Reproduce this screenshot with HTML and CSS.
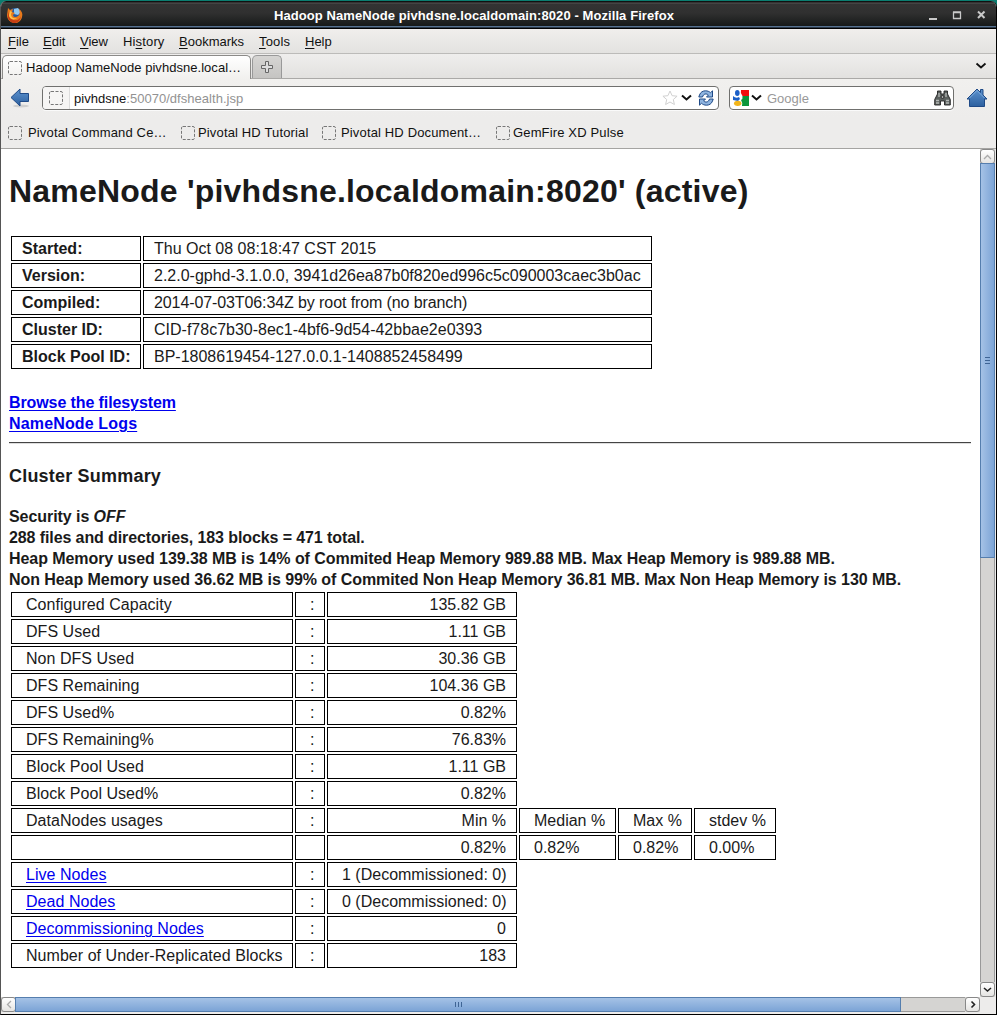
FILE: index.html
```html
<!DOCTYPE html>
<html lang="en">
<head>
<meta charset="utf-8">
<title>Hadoop NameNode pivhdsne.localdomain:8020</title>
<link rel="stylesheet" href="styles.css">
</head>
<body>
<div class="window">
  <header class="titlebar">
    <svg class="fox" width="16" height="16" viewBox="0 0 16 16"><circle cx="8" cy="8" r="7" fill="#285b9c"/><path d="M7 2l4-1 3 4-3 3-4-1z" fill="#8fc8ef"/><path d="M1 1l2 2 3-1-1 3 3 1-2 2c0 2 3 3 5 1 2-1 2-4 1-7 3 2 4 5 3 8-1 4-4 6-7 6-5 0-8-4-8-8z" fill="#e8791a"/><path d="M2 4c-1 5 1 8 5 9 3 1 6-1 7-4-1 6-4 7-7 7-5-1-8-6-5-12z" fill="#c63e14"/><path d="M3 4l2 1-1 2c0 4 3 5 6 4-3 3-8 1-8-3z" fill="#ffc247"/></svg>
    <span class="title">Hadoop NameNode pivhdsne.localdomain:8020 - Mozilla Firefox</span>
    <svg class="controls" width="60" height="12" viewBox="0 0 60 12" fill="none" stroke="#c9c9c9" stroke-width="2"><path d="M1 10h8"/><path d="M25.500 3.500h7v6h-7zM25 3h8" stroke-width="1.300"/><path d="M50 2.500l6.500 6.500M56.500 2.500l-6.500 6.500"/></svg>
  </header>

  <nav class="menubar"><span class="m1"><u>F</u>ile</span><span class="m2"><u>E</u>dit</span><span class="m3"><u>V</u>iew</span><span class="m4">Hi<u>s</u>tory</span><span class="m5"><u>B</u>ookmarks</span><span class="m6"><u>T</u>ools</span><span class="m7"><u>H</u>elp</span></nav>

  <div class="tabs">
    <div class="tab"><svg class="page-icon" width="14" height="14"><rect x=".5" y=".5" width="13" height="13" rx="1.5"/></svg><span>Hadoop NameNode pivhdsne.local…</span></div>
    <div class="newtab"><svg width="12" height="12" viewBox="0 0 12 12"><path d="M4.500.5h3v4h4v3h-4v4h-3v-4h-4v-3h4z" fill="#ddd" stroke="#666"/></svg></div>
    <svg class="alltabs" width="12" height="8" viewBox="0 0 12 8"><path d="M1.500 1.500l4.500 4 4.500-4" fill="none" stroke="#111" stroke-width="1.800"/></svg>
  </div>

  <div class="navbar">
    <svg class="back" width="20" height="20" viewBox="0 0 20 20"><defs><linearGradient id="blue" x2="0" y2="1"><stop stop-color="#5d93cf"/><stop offset="1" stop-color="#2d609f"/></linearGradient></defs><ellipse cx="11" cy="18" rx="8" ry="1.500" fill="#cfcfcf"/><path d="M1 9.500L10 1v4.500h8.500v8H10V18z" fill="url(#blue)" stroke="#1f4a87"/></svg>
    <div class="url">
      <div class="identity"><svg class="page-icon" width="14" height="14"><rect x=".5" y=".5" width="13" height="13" rx="1.5"/></svg></div>
      <span class="address"><b>pivhdsne</b>:50070/dfshealth.jsp</span>
      <svg class="star" width="16" height="16" viewBox="0 0 16 16"><path d="M8 1l2.100 4.700 5 .5-3.800 3.300 1.100 5L8 12l-4.400 2.500 1.100-5L.9 6.200l5-.5z" fill="#fff" stroke="#d0d0d0"/></svg>
      <svg class="drop" width="11" height="8" viewBox="0 0 11 8"><path d="M1 1.500l4.500 4 4.500-4" fill="none" stroke="#111" stroke-width="2"/></svg>
      <svg class="reload" width="16" height="16" viewBox="0 0 16 16" stroke="#1f4a87" stroke-width="1" fill="#8fb4df"><path d="M1.500 5C2.500 2 5 .8 7.500.8c2 0 3.800.7 5 1.900L14.500.8V7H8.500l1.900-2C8.500 3.300 5.500 3.500 4.500 7H.8z"/><path d="M14.500 11c-1 3-3.500 4.200-6 4.200-2 0-3.800-.7-5-1.900l-2 1.900V9h6l-1.900 2c1.900 1.700 4.900 1.500 5.900-2h3.700z"/></svg>
    </div>
    <div class="search">
      <svg class="g" width="16" height="16" viewBox="0 0 16 16"><path d="M8 0h8v6H9.500Q7 3 8 0z" fill="#f20d0d"/><path d="M9.500 6H16v10H9q1-3-1-6 2-1 1.500-4z" fill="#0b963b"/><path d="M0 6q3 3 6 1l1 2-2 2-5-1z" fill="#1c60c8"/><ellipse cx="4.300" cy="3" rx="2.300" ry="3" fill="#1c60c8"/><ellipse cx="4.700" cy="13.300" rx="3.700" ry="2.600" fill="#f2b51b"/></svg>
      <svg class="drop" width="11" height="8" viewBox="0 0 11 8"><path d="M1 1.500l4.500 4 4.500-4" fill="none" stroke="#111" stroke-width="2"/></svg>
      <span class="placeholder">Google</span>
      <svg class="find" width="17" height="16" viewBox="0 0 17 16" fill="#5b605e" stroke="#222" stroke-width=".9"><path d="M3.500 1h3.500v3h3V1h3.500v3l2.800 5.500v5.500H10.500v-4h-4v4H.7V9.500L3.500 4z"/><path d="M2 10.500h3M2 13h3M12 10.500h3M12 13h3M5 3v4M12 3v4" stroke="#b5b8b6" stroke-width="1.300"/><circle cx="8.500" cy="7" r="1.500" fill="#aaa"/></svg>
    </div>
    <svg class="home" width="22" height="20" viewBox="0 0 22 20"><path d="M1 11L11 1l3.500 3.500V1.500H17V7l4 4h-2.500v7.500h-15V11z" fill="url(#blue)" stroke="#1f4a87"/><path d="M3.500 10L11 2.500 18.500 10" fill="none" stroke="#7facdc"/></svg>
  </div>

  <div class="bookmarks">
    <span class="k1"><svg class="page-icon" width="14" height="14"><rect x=".5" y=".5" width="13" height="13" rx="1.5"/></svg>Pivotal Command Ce…</span>
    <span class="k2"><svg class="page-icon" width="14" height="14"><rect x=".5" y=".5" width="13" height="13" rx="1.5"/></svg>Pivotal HD Tutorial</span>
    <span class="k3"><svg class="page-icon" width="14" height="14"><rect x=".5" y=".5" width="13" height="13" rx="1.5"/></svg>Pivotal HD Document…</span>
    <span class="k4"><svg class="page-icon" width="14" height="14"><rect x=".5" y=".5" width="13" height="13" rx="1.5"/></svg>GemFire XD Pulse</span>
  </div>

  <div class="viewport">
    <main class="content">
      <h1>NameNode 'pivhdsne.localdomain:8020' (active)</h1>
      <table class="info">
        <colgroup><col class="c-label"><col class="c-value"></colgroup>
        <tr><th>Started:</th><td>Thu Oct 08 08:18:47 CST 2015</td></tr>
        <tr><th>Version:</th><td>2.2.0-gphd-3.1.0.0, 3941d26ea87b0f820ed996c5c090003caec3b0ac</td></tr>
        <tr><th>Compiled:</th><td class="tight">2014-07-03T06:34Z by root from (no branch)</td></tr>
        <tr><th>Cluster ID:</th><td>CID-f78c7b30-8ec1-4bf6-9d54-42bbae2e0393</td></tr>
        <tr><th>Block Pool ID:</th><td>BP-1808619454-127.0.0.1-1408852458499</td></tr>
      </table>
      <div class="links"><a class="tight" href="#">Browse the filesystem</a><br><a class="loose" href="#">NameNode Logs</a></div>
      <hr>
      <h3>Cluster Summary</h3>
      <div class="summary">Security is <em>OFF</em><br><span class="tight">288 files and directories, 183 blocks = 471 total.</span><br>Heap Memory used 139.38 MB is 14% of Commited Heap Memory 989.88 MB. Max Heap Memory is 989.88 MB.<br>Non Heap Memory used 36.62 MB is 99% of Commited Non Heap Memory 36.81 MB. Max Non Heap Memory is 130 MB.</div>
      <table class="stats">
        <colgroup><col class="s1"><col class="s2"><col class="s3"><col class="s4"><col class="s5"><col class="s6"></colgroup>
        <tr><td>Configured Capacity</td><td>:</td><td>135.82 GB</td></tr>
        <tr><td>DFS Used</td><td>:</td><td>1.11 GB</td></tr>
        <tr><td>Non DFS Used</td><td>:</td><td>30.36 GB</td></tr>
        <tr><td>DFS Remaining</td><td>:</td><td>104.36 GB</td></tr>
        <tr><td>DFS Used%</td><td>:</td><td>0.82%</td></tr>
        <tr><td>DFS Remaining%</td><td>:</td><td>76.83%</td></tr>
        <tr><td>Block Pool Used</td><td>:</td><td>1.11 GB</td></tr>
        <tr><td>Block Pool Used%</td><td>:</td><td>0.82%</td></tr>
        <tr><td>DataNodes usages</td><td>:</td><td>Min %</td><td>Median %</td><td>Max %</td><td>stdev %</td></tr>
        <tr><td></td><td></td><td>0.82%</td><td>0.82%</td><td>0.82%</td><td>0.00%</td></tr>
        <tr><td><a href="#">Live Nodes</a></td><td>:</td><td>1 (Decommissioned: 0)</td></tr>
        <tr><td><a href="#">Dead Nodes</a></td><td>:</td><td>0 (Decommissioned: 0)</td></tr>
        <tr><td><a href="#">Decommissioning Nodes</a></td><td>:</td><td>0</td></tr>
        <tr><td>Number of Under-Replicated Blocks</td><td>:</td><td>183</td></tr>
      </table>
    </main>
    <div class="vscroll">
      <div class="btn off"><svg width="9" height="6" viewBox="0 0 9 6"><path d="M1 5l3.500-3.500L8 5"/></svg></div>
      <div class="thumb"><svg width="5" height="7"><path d="M0 .5h5M0 3.500h5M0 6.500h5"/></svg></div>
      <div class="track"></div>
      <div class="btn"><svg width="9" height="6" viewBox="0 0 9 6"><path d="M1 1l3.500 3L8 1"/></svg></div>
    </div>
    <div class="hscroll">
      <div class="btn off"><svg width="6" height="9" viewBox="0 0 6 9"><path d="M5 1L1.500 4.500 5 8"/></svg></div>
      <div class="thumb"><svg width="7" height="5"><path d="M.5 0v5M3.500 0v5M6.500 0v5"/></svg></div>
      <div class="track"></div>
      <div class="btn"><svg width="6" height="9" viewBox="0 0 6 9"><path d="M1.500 1.500l3 3-3 3"/></svg></div>
    </div>
    <div class="corner"></div>
  </div>
</div>
</body>
</html>
```
FILE: styles.css
```css
* { box-sizing: border-box; }
html { height: 1016px; overflow: hidden; }
body { margin: 0; height: 1016px; overflow: hidden; background: #0b7d70; font: 13px "Liberation Sans", Arial, sans-serif; color: #111; }
svg { display: block; flex: none; }
.window { width: 997px; height: 1014px; margin-top: 1px; border: solid #000; border-width: 0 1px 1px; border-left-color: #555; border-radius: 6px 6px 0 0; background: #edeceb; display: flex; flex-direction: column; overflow: hidden; box-shadow: 0 1px #fff; white-space: nowrap; }

.titlebar { height: 28px; flex: none; display: flex; align-items: center; padding: 0 11px 0 6px; background: linear-gradient(#111 0, #111 1px, #555 2px, #333 3px, #303030 12px, #171a19 25px, #56718f 25px, #56718f 26px, #000 27px); }
.title { flex: 1; padding-right: 3px; text-align: center; color: #fff; font-weight: bold; letter-spacing: .085px; }
.controls { margin-right: -3px; }
.menubar { height: 25px; flex: none; display: flex; background: linear-gradient(#f0eeec, #e3e2e0); border-bottom: 1px solid #bcbbb9; line-height: 25px; padding-left: 7px; }
.menubar u { text-underline-offset: 2px; }
.m1 { width: 35px; } .m2 { width: 37px; } .m3 { width: 43px; } .m4 { width: 56px; } .m5 { width: 80px; } .m6 { width: 46px; }
.m4, .m6 { letter-spacing: .15px; }

.tabs { height: 25px; flex: none; display: flex; align-items: flex-end; background: linear-gradient(#efeeed, #e2e1df); border-bottom: 1px solid #aaa9a7; padding-left: 1px; }
.tab { width: 249px; height: 24px; margin-bottom: -1px; border: 1px solid #8b8a88; border-bottom: 0; border-radius: 5px 5px 0 0; background: linear-gradient(#fff, #f1f0ee); display: flex; align-items: center; gap: 4px; padding-left: 5px; letter-spacing: .04px; }
.newtab { width: 30px; height: 23px; margin-left: 1px; border: 1px solid #999; border-bottom: 0; border-radius: 5px 5px 0 0; background: linear-gradient(#d6d5d3, #c5c4c2); display: grid; place-items: center; }
.alltabs { margin: 0 9px 8px auto; }
.page-icon rect { fill: none; stroke: #777; stroke-dasharray: 3 1.5; }

.navbar { height: 38px; flex: none; display: flex; align-items: center; padding: 0 8px 0 9px; background: linear-gradient(#f1f0ee, #edeceb); }
.url, .search { height: 24px; border: 1px solid #70706e; border-radius: 4px; background: #fff; display: flex; align-items: center; box-shadow: 0 1px #fafafa; }
.url { width: 677px; margin-left: 12px; }
.identity { width: 27px; height: 22px; border-right: 1px solid #ddd; background: #f6f5f4; border-radius: 3px 0 0 3px; display: grid; place-items: center; }
.address { flex: 1; padding-left: 4px; color: #929292; letter-spacing: .03px; }
.address b { font-weight: normal; color: #111; }
.star { margin-right: 3px; }
.reload { margin: 0 4px 0 6px; }
.search { width: 225px; margin-left: 10px; padding: 0 2px 0 3px; }
.search .drop { margin-left: 2px; }
.placeholder { flex: 1; padding-left: 5px; color: #999; }
.home { margin-left: 12px; }

.bookmarks { height: 32px; flex: none; display: flex; align-items: center; padding-left: 7px; border-bottom: 1px solid #a5a4a2; background: #edeceb; letter-spacing: .15px; }
.bookmarks span { display: flex; align-items: center; }
.k1 { width: 173px; gap: 6px; } .k2 { width: 141px; gap: 3px; } .k3 { width: 174px; gap: 5px; } .k4 { gap: 3px; }

.viewport { flex: 1; min-height: 0; display: grid; grid-template: 848px 16px / 979px 16px; background: #edeceb; }
.content { background: #fff; padding: 21px 9px 0 8px; font-size: 16px; color: #1a1a1a; overflow: hidden; }
h1 { margin: 0 0 22px; font-size: 32px; line-height: 42px; letter-spacing: .21px; }
table { border-spacing: 2px; table-layout: fixed; }
td, th { height: 25px; border: 1px solid #000; padding: 0 10px; line-height: 23px; text-align: left; }
.info { width: 645px; }
.c-label { width: 130px; } .c-value { width: 509px; }
a { color: #00e; text-underline-offset: 2px; text-decoration-thickness: 1px; }
.links { margin-top: 21px; line-height: 21px; font-weight: bold; }
hr { margin: 8px 0 0; border: 0; height: 2px; background: linear-gradient(#444 50%, #ddd 50%); }
h3 { margin: 21px 0 0; font-size: 18px; line-height: 22px; letter-spacing: .2px; }
.summary { margin-top: 19px; line-height: 21px; font-weight: bold; letter-spacing: -.065px; }
.tight { letter-spacing: -.1px; }
.loose { letter-spacing: .15px; }
.stats { width: 769px; }
.stats td { padding-left: 14px; }
.stats td:first-child { letter-spacing: .04px; }
.stats td:nth-child(3) { text-align: right; }
.s1 { width: 282px; } .s2 { width: 30px; } .s3 { width: 190px; } .s4 { width: 97px; } .s5 { width: 74px; } .s6 { width: 82px; }

.vscroll, .hscroll { display: flex; background: #d5d4d2; }
.vscroll { flex-direction: column; width: 15px; }
.hscroll { height: 15px; width: 979px; }
.btn { width: 15px; height: 15px; flex: none; border: 1px solid #888; border-radius: 3px; background: linear-gradient(#fff, #e5e4e2); display: grid; place-items: center; }
.btn path { fill: none; stroke: #222; stroke-width: 1.6; }
.off path { stroke: #aaa; stroke-width: 1.3; }
.thumb { display: grid; place-items: center; border: 1px solid #557eae; flex: none; }
.thumb path { stroke: #3f6595; }
.vscroll .thumb { height: 395px; margin-top: -1px; background: linear-gradient(90deg, #a5c2e6, #7ca4d6); }
.hscroll .thumb { width: 886px; margin-left: -1px; background: linear-gradient(#a5c2e6, #7ca4d6); }
.track { flex: 1; border: 0 solid #999; }
.vscroll .track { border-width: 0 1px; }
.hscroll .track { border-width: 1px 0; }
```
